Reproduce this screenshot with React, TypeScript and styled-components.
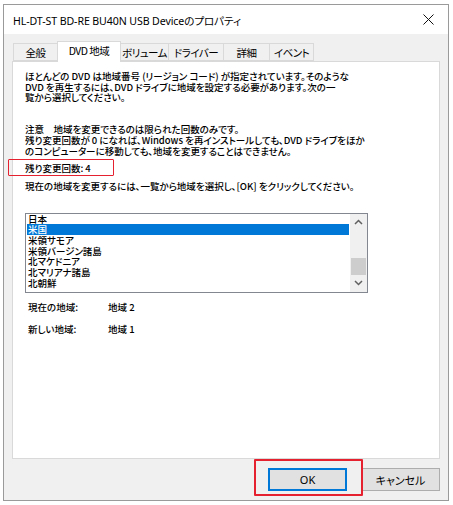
import React from 'react';
import styled, { createGlobalStyle } from 'styled-components';

const Global = createGlobalStyle`
  html, body { margin: 0; padding: 0; background: #ffffff; }
  body { width: 453px; height: 505px; overflow: hidden; }
`;

const JP = `"Noto Sans CJK JP", "Noto Sans", sans-serif`;
const UI = `"Noto Sans", "Noto Sans CJK JP", sans-serif`;

const Window = styled.div`
  margin: 4px 0 0 3px;
  width: 446px;
  height: 497px;
  box-sizing: border-box;
  border: 1px solid #9a9a9a;
  display: flex;
  flex-direction: column;
  background: #f0f0f0;
  font-family: ${JP};
  color: #000;
`;

const TitleBar = styled.div`
  height: 29px;
  flex: none;
  background: #ffffff;
  display: flex;
  align-items: center;
  justify-content: space-between;
  padding: 0 9px 0 9px;
  font-family: ${UI};
  font-size: 10.6px;
  font-feature-settings: "palt";
  letter-spacing: -0.1px;
`;

const TitleText = styled.span`
  padding-top: 1px;
`;

const CloseButton = styled.div`
  width: 30px;
  height: 29px;
  display: flex;
  align-items: center;
  justify-content: center;
  margin-right: -4px;
`;

const Body = styled.div`
  flex: 1;
  display: flex;
  flex-direction: column;
  padding: 7px 8px 0 8px;
`;

const TabRow = styled.div`
  display: flex;
  align-items: flex-end;
  height: 20px;
  padding-left: 1px;
`;

const Tab = styled.div<{ $w: number; $active?: boolean }>`
  box-sizing: border-box;
  width: ${(p) => p.$w}px;
  height: ${(p) => (p.$active ? 21 : 18)}px;
  margin-bottom: ${(p) => (p.$active ? -1 : 0)}px;
  margin-left: -1px;
  &:first-child { margin-left: 0; }
  border: 1px solid #d9d9d9;
  border-bottom: ${(p) => (p.$active ? 'none' : '1px solid #d9d9d9')};
  background: ${(p) => (p.$active ? '#ffffff' : '#f0f0f0')};
  position: relative;
  z-index: ${(p) => (p.$active ? 2 : 1)};
  display: flex;
  align-items: center;
  justify-content: center;
  padding-bottom: ${(p) => (p.$active ? 3 : 0)}px;
  font-size: 10.5px;
  letter-spacing: -0.5px;
  font-feature-settings: "palt";
  white-space: nowrap;
`;

const Panel = styled.div`
  box-sizing: border-box;
  height: 398px;
  border: 1px solid #d9d9d9;
  background: #ffffff;
  padding: 9px 12px 0 12px;
  font-size: 9.5px;
  font-weight: 500;
  line-height: 10.7px;
  font-feature-settings: "palt";
  display: flex;
  flex-direction: column;
`;

const Para = styled.div<{ $mt?: number }>`
  margin-top: ${(p) => p.$mt ?? 0}px;
  white-space: nowrap;
`;

const Highlighted = styled.div`
  position: relative;
  margin-top: 7px;
`;

const RedBox = styled.div<{ $l: number; $t: number; $w: number; $h: number; $bw: number }>`
  position: absolute;
  left: ${(p) => p.$l}px;
  top: ${(p) => p.$t}px;
  width: ${(p) => p.$w}px;
  height: ${(p) => p.$h}px;
  box-sizing: border-box;
  border: ${(p) => p.$bw}px solid #e5212f;
  border-radius: 1px;
  pointer-events: none;
`;

const ListBox = styled.div`
  margin-top: 21px;
  width: 343px;
  height: 80px;
  box-sizing: border-box;
  border: 1px solid #828790;
  display: flex;
`;

const ListItems = styled.div`
  flex: 1;
  padding: 0 1px;
  font-size: 9.5px;
`;

const ListItem = styled.div<{ $sel?: boolean }>`
  height: 10.67px;
  line-height: 10.67px;
  padding-left: 1px;
  background: ${(p) => (p.$sel ? '#0078d7' : 'transparent')};
  color: ${(p) => (p.$sel ? '#ffffff' : '#000000')};
  white-space: nowrap;
`;

const ScrollBar = styled.div`
  width: 17px;
  background: #f0f0f0;
  display: flex;
  flex-direction: column;
  align-items: center;
`;

const ScrollArrow = styled.div`
  height: 17px;
  width: 17px;
  display: flex;
  align-items: center;
  justify-content: center;
`;

const ScrollTrack = styled.div`
  flex: 1;
  width: 100%;
  display: flex;
  flex-direction: column;
  justify-content: flex-end;
  align-items: center;
`;

const ScrollThumb = styled.div`
  width: 15px;
  height: 17px;
  background: #cdcdcd;
`;

const InfoGrid = styled.div`
  margin-top: 9px;
  margin-left: 3px;
  display: grid;
  grid-template-columns: 80px auto;
  row-gap: 11.3px;
`;

const Footer = styled.div`
  flex: 1;
  display: flex;
  justify-content: flex-end;
  align-items: flex-start;
  padding: 9px 0 0 0;
  gap: 14px;
`;

const ButtonWrap = styled.div`
  position: relative;
`;

const Button = styled.div<{ $focused?: boolean }>`
  box-sizing: border-box;
  width: 79px;
  height: 23px;
  background: #e1e1e1;
  border: 1px solid ${(p) => (p.$focused ? '#0078d7' : '#adadad')};
  box-shadow: ${(p) => (p.$focused ? 'inset 0 0 0 1px #0078d7' : 'none')};
  display: flex;
  align-items: center;
  justify-content: center;
  font-family: ${UI};
  font-size: 11px;
  font-feature-settings: "palt";
`;

const items = ['日本', '米国', '米領サモア', '米領バージン諸島', '北マケドニア', '北マリアナ諸島', '北朝鮮'];
const tabs: { label: string; w: number; active?: boolean }[] = [
  { label: '全般', w: 45 },
  { label: 'DVD 地域', w: 64, active: true },
  { label: 'ボリューム', w: 49 },
  { label: 'ドライバー', w: 56 },
  { label: '詳細', w: 47 },
  { label: 'イベント', w: 45 },
];

export default function App() {
  return (
    <>
      <Global />
      <Window>
        <TitleBar>
          <TitleText>HL-DT-ST BD-RE BU40N USB Deviceのプロパティ</TitleText>
          <CloseButton>
            <svg width="11" height="11" viewBox="0 0 11 11">
              <path d="M0.5 0.5 L10.5 10.5 M10.5 0.5 L0.5 10.5" stroke="#111" strokeWidth="1" fill="none" />
            </svg>
          </CloseButton>
        </TitleBar>
        <Body>
          <TabRow>
            {tabs.map((t) => (
              <Tab key={t.label} $w={t.w} $active={t.active}>
                {t.label}
              </Tab>
            ))}
          </TabRow>
          <Panel>
            <Para>
              ほとんどの DVD は地域番号 (リージョン コード) が指定されています。そのような
              <br />
              DVD を再生するには、DVD ドライブに地域を設定する必要があります。次の一
              <br />
              覧から選択してください。
            </Para>
            <Para $mt={21}>
              注意　地域を変更できるのは限られた回数のみです。
              <br />
              残り変更回数が 0 になれば、Windows を再インストールしても、DVD ドライブをほか
              <br />
              のコンピューターに移動しても、地域を変更することはできません。
            </Para>
            <Highlighted>
              残り変更回数: 4
              <RedBox $l={-17} $t={-4} $w={106} $h={17} $bw={1.5} />
            </Highlighted>
            <Para $mt={7}>現在の地域を変更するには、一覧から地域を選択し、[OK] をクリックしてください。</Para>
            <ListBox>
              <ListItems>
                {items.map((it) => (
                  <ListItem key={it} $sel={it === '米国'}>
                    {it}
                  </ListItem>
                ))}
              </ListItems>
              <ScrollBar>
                <ScrollArrow>
                  <svg width="9" height="6" viewBox="0 0 9 6">
                    <path d="M1 5 L4.5 1.5 L8 5" stroke="#606060" strokeWidth="1.5" fill="none" />
                  </svg>
                </ScrollArrow>
                <ScrollTrack>
                  <ScrollThumb />
                </ScrollTrack>
                <ScrollArrow>
                  <svg width="9" height="6" viewBox="0 0 9 6">
                    <path d="M1 1 L4.5 4.5 L8 1" stroke="#606060" strokeWidth="1.5" fill="none" />
                  </svg>
                </ScrollArrow>
              </ScrollBar>
            </ListBox>
            <InfoGrid>
              <span>現在の地域:</span>
              <span>地域 2</span>
              <span>新しい地域:</span>
              <span>地域 1</span>
            </InfoGrid>
          </Panel>
          <Footer>
            <ButtonWrap>
              <Button $focused>OK</Button>
              <RedBox $l={-14} $t={-9} $w={109} $h={37} $bw={2.5} />
            </ButtonWrap>
            <Button>キャンセル</Button>
          </Footer>
        </Body>
      </Window>
    </>
  );
}
